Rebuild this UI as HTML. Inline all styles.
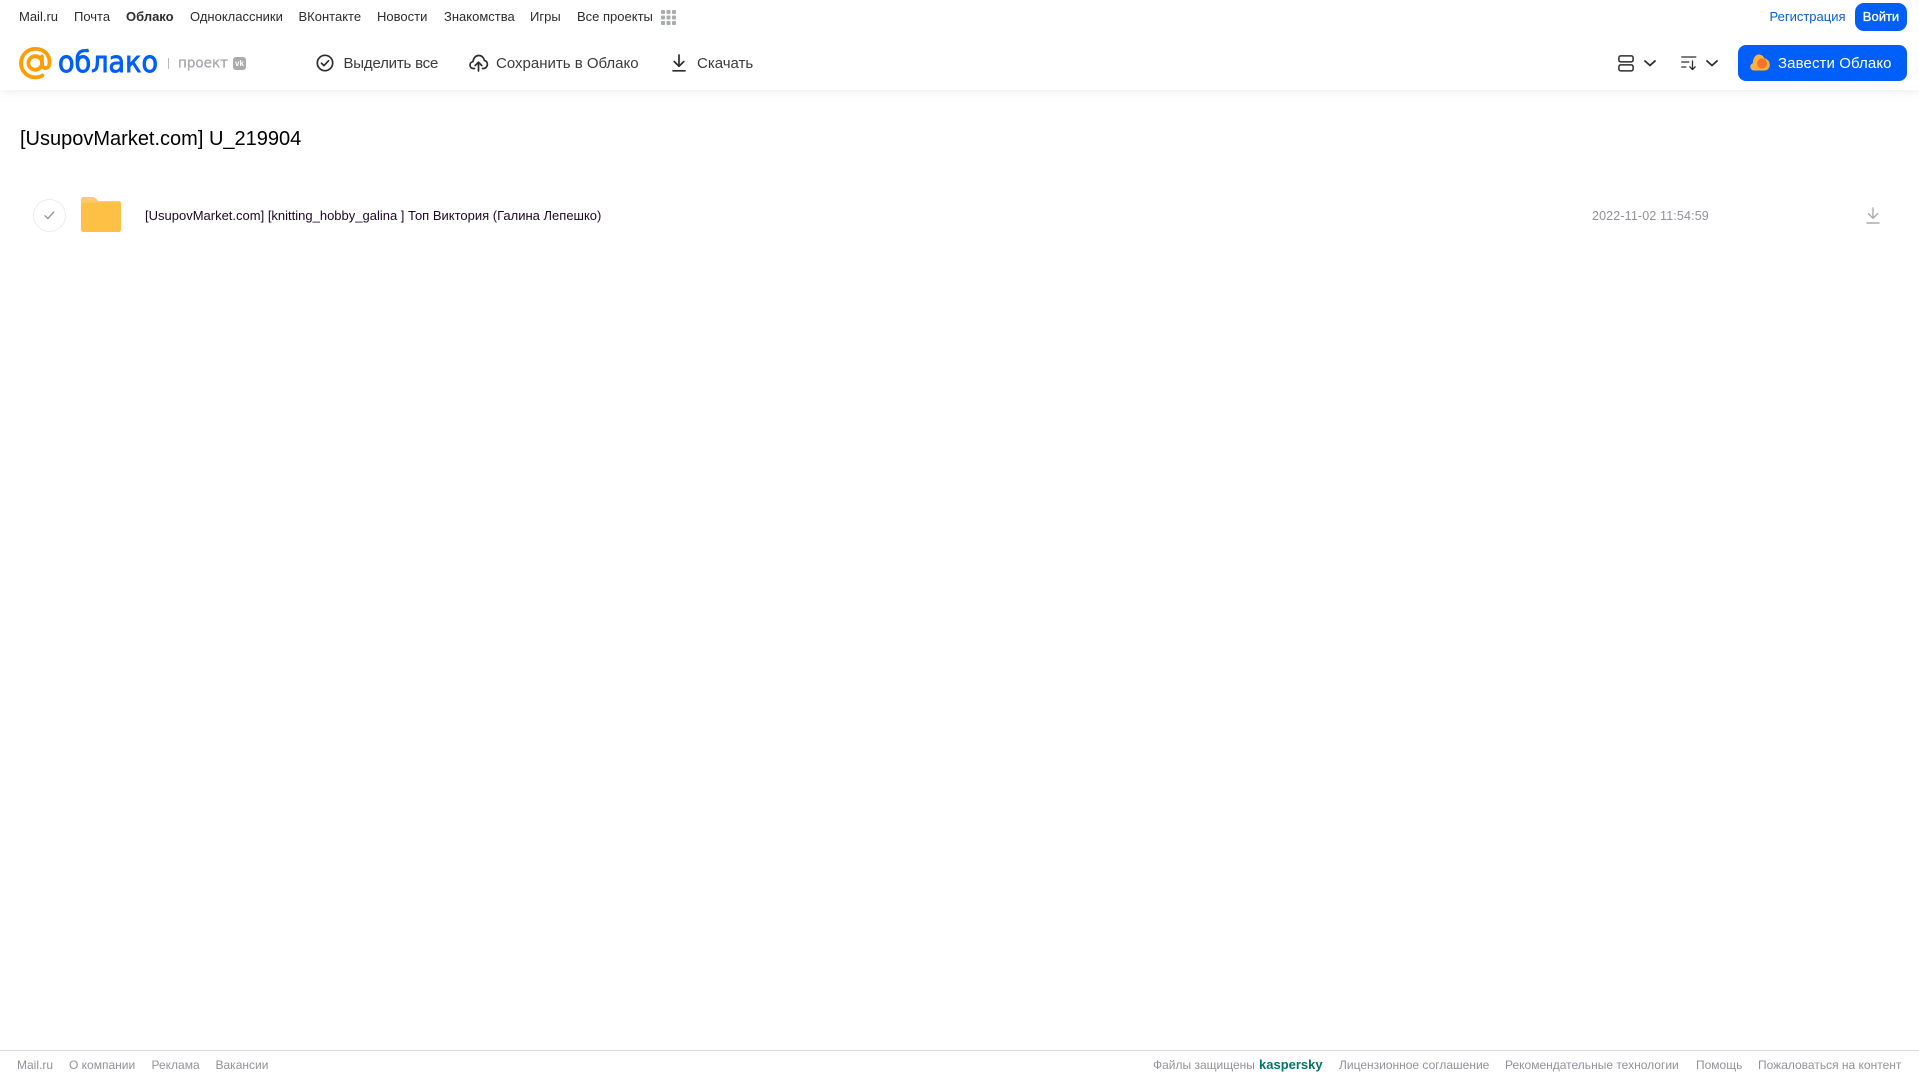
<!DOCTYPE html>
<html lang="ru"><head><meta charset="utf-8"><title>Облако</title>
<style>
html,body{margin:0;padding:0;background:#fff;width:1919px;height:1079px;overflow:hidden}
body{position:relative;font-family:"Liberation Sans",Arial,sans-serif}
.t{position:absolute;white-space:nowrap;line-height:16px}
.n{font-size:13px;color:#2c2d2e;top:9px}
.b{font-size:15px;color:#3a3b3d;top:55.500px}
.f{font-size:12px;color:#919399;top:1057px}
svg{position:absolute;overflow:visible}
#hd{position:absolute;left:0;top:0;width:1919px;height:90px;background:#fff;box-shadow:0 2px 10px rgba(0,0,0,.07)}
#ft{position:absolute;left:0;top:1050px;width:1919px;height:1px;background:#d9d9d9}
</style></head><body>
<div id="hd"></div>
<span class="t n" style="left:19px">Mail.ru</span>
<span class="t n" style="left:74px">Почта</span>
<span class="t n" style="left:126px;font-weight:700">Облако</span>
<span class="t n" style="left:190px">Одноклассники</span>
<span class="t n" style="left:298.500px">ВКонтакте</span>
<span class="t n" style="left:377px">Новости</span>
<span class="t n" style="left:444px">Знакомства</span>
<span class="t n" style="left:530px">Игры</span>
<span class="t n" style="left:577px">Все проекты</span>
<svg style="left:661px;top:10px" width="15" height="15" fill="#a9abb0">
<rect x="0" y="0" width="4" height="4" rx="1"/><rect x="5.500" y="0" width="4" height="4" rx="1"/><rect x="11" y="0" width="4" height="4" rx="1"/>
<rect x="0" y="5.500" width="4" height="4" rx="1"/><rect x="5.500" y="5.500" width="4" height="4" rx="1"/><rect x="11" y="5.500" width="4" height="4" rx="1"/>
<rect x="0" y="11" width="4" height="4" rx="1"/><rect x="5.500" y="11" width="4" height="4" rx="1"/><rect x="11" y="11" width="4" height="4" rx="1"/>
</svg>

<!-- logo -->
<svg style="left:19px;top:47px" width="33" height="33" viewBox="0 0 33 33" fill="none" stroke="#ff9e00" stroke-width="3.800">
<circle cx="16.200" cy="16" r="6.800"/>
<path d="M23 9.500V17.500c0 5 6.800 5 7.400-.6C31.300 7.500 25 1.900 16.200 1.900 8.500 1.900 2 8.200 2 16.100c0 8 6.400 14.300 14.200 14.300 2.800 0 5-.6 7.200-1.900" stroke-linecap="round"/>
</svg>
<svg style="left:0;top:0" width="300" height="90">
<text x="58" y="72" font-family="'DejaVu Sans',sans-serif" font-size="29" fill="#005ff9" stroke="#005ff9" stroke-width=".9" textLength="100" lengthAdjust="spacingAndGlyphs">облако</text>
<text x="178" y="67.500" font-family="'DejaVu Sans',sans-serif" font-size="14" fill="#a9abb0" stroke="#a9abb0" stroke-width=".35" textLength="50" lengthAdjust="spacingAndGlyphs">проект</text>
</svg>
<div style="position:absolute;left:167.500px;top:58px;width:1px;height:11px;background:#b8b9bd"></div>
<div style="position:absolute;left:233px;top:57px;width:13px;height:13px;border-radius:3px;background:#a9abb0;color:#fff;font:700 8px/13px 'Liberation Sans',sans-serif;text-align:center">vk</div>

<!-- toolbar -->
<svg style="left:316px;top:54px" width="18" height="18" viewBox="0 0 18 18" fill="none" stroke="#2c2d2e" stroke-width="1.700">
<circle cx="9" cy="9" r="7.700"/><path d="M5.500 9.200l2.500 2.400 4.500-4.800" stroke-linecap="round" stroke-linejoin="round"/>
</svg>
<span class="t b" style="left:343.500px;letter-spacing:-.2px">Выделить все</span>
<svg style="left:469px;top:54px" width="19" height="18" viewBox="0 0 19 18" fill="none" stroke="#2c2d2e" stroke-width="1.700" stroke-linecap="round" stroke-linejoin="round">
<path d="M5.500 14.500H4.500C2.300 14.500 1 12.900 1 11.100c0-1.800 1.300-3.200 3-3.400C4.300 4.300 6.600 1.500 9.800 1.500c3 0 5.200 2.200 5.600 5 1.900.2 3 1.900 3 3.800 0 2.300-1.700 4.200-4 4.200h-.9"/>
<path d="M9.500 17V8.500M6.200 11.500l3.300-3.300 3.300 3.300"/>
</svg>
<span class="t b" style="left:496px">Сохранить в Облако</span>
<svg style="left:672px;top:54px" width="14" height="18" viewBox="0 0 14 18" fill="none" stroke="#2c2d2e" stroke-width="1.700" stroke-linecap="round" stroke-linejoin="round">
<path d="M7 1v11M2.200 7.500L7 12.300l4.800-4.800"/><path d="M1 16.800h12"/>
</svg>
<span class="t b" style="left:697px">Скачать</span>

<!-- right -->
<svg style="left:1618px;top:55px" width="16" height="17" viewBox="0 0 16 17" fill="none" stroke="#2c2d2e" stroke-width="1.500">
<rect x=".9" y=".9" width="14.200" height="6" rx="1.800"/><rect x=".9" y="9.900" width="14.200" height="6" rx="1.800"/>
</svg>
<svg style="left:1644px;top:60px" width="12" height="7" fill="none" stroke="#2c2d2e" stroke-width="1.800" stroke-linecap="round" stroke-linejoin="round"><path d="M1 1l5 4.500L11 1"/></svg>
<svg style="left:1681px;top:56px" width="16" height="15" viewBox="0 0 16 15" fill="none" stroke="#2c2d2e" stroke-width="1.300" stroke-linecap="round" stroke-linejoin="round">
<path d="M.8 1h14M.8 6h7M.8 11h4"/><path d="M11.500 5v8.500M8.800 10.800l2.700 2.800 2.700-2.800"/>
</svg>
<svg style="left:1706px;top:60px" width="12" height="7" fill="none" stroke="#2c2d2e" stroke-width="1.800" stroke-linecap="round" stroke-linejoin="round"><path d="M1 1l5 4.500L11 1"/></svg>

<span class="t n" style="left:1769.500px;color:#0a5fd8">Регистрация</span>
<div style="position:absolute;left:1855px;top:3px;width:52px;height:28px;border-radius:9px;background:#005ff9;color:#fff;font:400 13px/28px 'Liberation Sans',sans-serif;text-align:center;-webkit-text-stroke:.3px #fff">Войти</div>
<div style="position:absolute;left:1738px;top:45px;width:169px;height:36px;border-radius:8px;background:#005ff9"></div>
<svg style="left:1750px;top:54px" width="20" height="18" viewBox="0 0 20 18">
<path d="M4 16.500C1.800 16.500 .3 14.800 .3 12.800c0-1.700 1-3 2.500-3.500C3 3.500 5.800 .5 9 .5c2.500 0 4.600 1.800 5.500 4 3 .1 5.300 3.100 5.300 6.300 0 3.200-2.200 5.700-5 5.700z" fill="#ffb03b"/>
<circle cx="12" cy="9.500" r="5" fill="#f4722b"/>
</svg>
<span class="t b" style="left:1778px;color:#fff;letter-spacing:.1px">Завести Облако</span>

<!-- content -->
<span class="t" style="left:20px;top:126.500px;font-size:20px;line-height:24px;color:#000">[UsupovMarket.com] U_219904</span>
<div style="position:absolute;left:33px;top:199px;width:31px;height:31px;border:1px solid #ececee;border-radius:50%;background:#fff"></div>
<svg style="left:44px;top:211px" width="11" height="9" fill="none" stroke="#999" stroke-width="1.400" stroke-linecap="round" stroke-linejoin="round"><path d="M1 4.800L3.800 7.500 9.800 1"/></svg>
<svg style="left:81px;top:197px" width="40" height="35" viewBox="0 0 40 35">
<path d="M0 2.500C0 1.100 1.100 0 2.500 0h9c1.400 0 2.400.5 3.300 1.500L17.500 4H37.500c1.400 0 2.500 1.100 2.500 2.500V32.500c0 1.400-1.100 2.500-2.500 2.500H2.500C1.100 35 0 33.900 0 32.500z" fill="#ffcb68"/>
<path d="M0 5.500h40V32.500c0 1.400-1.100 2.500-2.500 2.500H2.500C1.100 35 0 33.900 0 32.500z" fill="#ffc145"/>
</svg>
<span class="t" style="left:145px;top:208px;font-size:13px;color:#1c0a24">[UsupovMarket.com] [knitting_hobby_galina ] Топ Виктория (Галина Лепешко)</span>
<span class="t" style="left:1592px;top:208px;font-size:12.500px;color:#919399;letter-spacing:.14px">2022-11-02 11:54:59</span>
<svg style="left:1866px;top:207px" width="14" height="17" viewBox="0 0 14 17" fill="none" stroke="#a9abb0" stroke-width="1.400" stroke-linecap="round" stroke-linejoin="round">
<path d="M7 1v10M2.500 6.800L7 11.200l4.500-4.400"/><path d="M1 16h12"/>
</svg>

<!-- footer -->
<div id="ft"></div>
<span class="t f" style="left:17px">Mail.ru</span>
<span class="t f" style="left:69px">О компании</span>
<span class="t f" style="left:151.500px">Реклама</span>
<span class="t f" style="left:215.500px">Вакансии</span>
<span class="t f" style="left:1153px">Файлы защищены</span>
<span class="t f" style="left:1259px;color:#00766a;font-weight:700;font-size:13px">kaspersky</span>
<span class="t f" style="left:1339px">Лицензионное соглашение</span>
<span class="t f" style="left:1505px">Рекомендательные технологии</span>
<span class="t f" style="left:1696px">Помощь</span>
<span class="t f" style="left:1758px">Пожаловаться на контент</span>
</body></html>
